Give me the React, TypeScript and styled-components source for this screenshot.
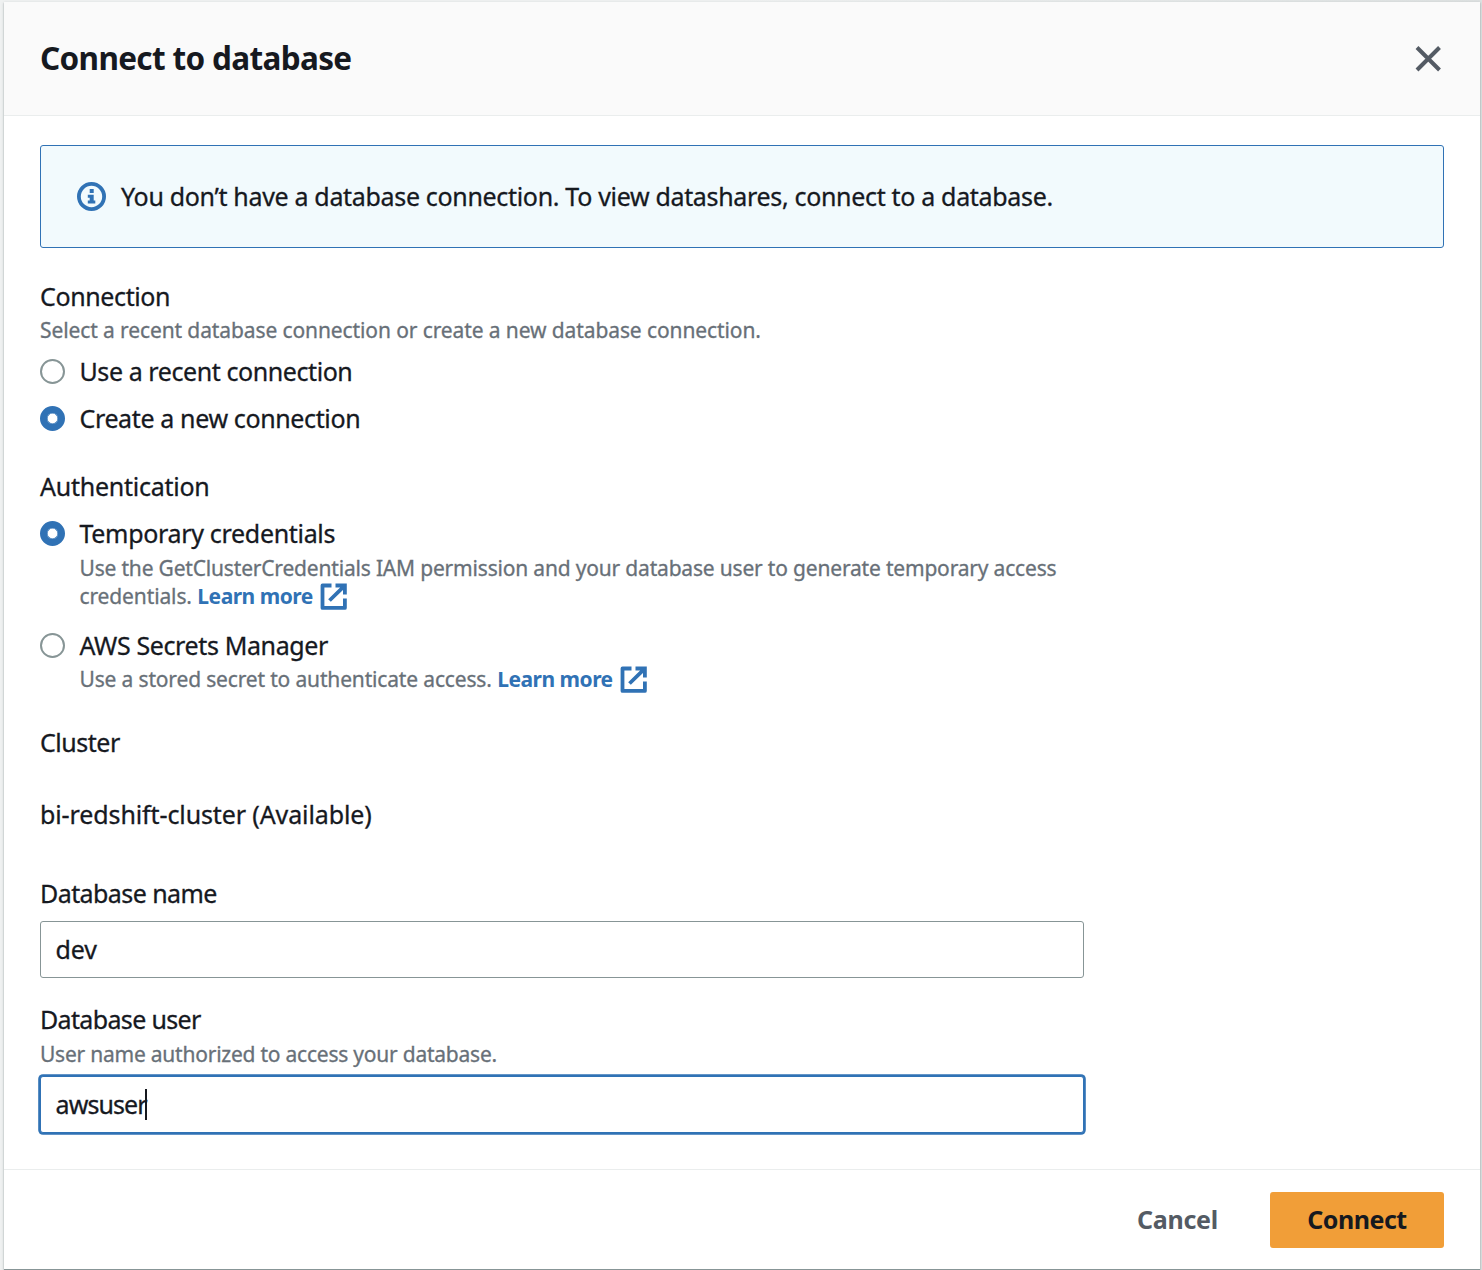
import React from "react";
import styled, { createGlobalStyle } from "styled-components";

const GlobalStyle = createGlobalStyle`
  *, *::before, *::after { box-sizing: border-box; }
  html, body { margin: 0; padding: 0; }
  body {
    background: #eff1f1;
    color: #16191f;
    font-family: "Noto Sans", "Open Sans", sans-serif;
    font-size: 25px;
    line-height: 32px;
    overflow: hidden;
    -webkit-text-stroke: 0.3px currentColor;
  }
`;

const Backdrop = styled.div`
  display: flex;
  height: 1270px;
  width: 1482px;
  padding: 2px 2px 0 4px;
  background: linear-gradient(90deg, #eff1f1 50%, #dde1e1 100%);
`;

const Dialog = styled.section`
  flex: 1;
  display: flex;
  flex-direction: column;
  background: #fff;
  border-bottom: 1px solid #879596;
  box-shadow: 0 1px 1px 0 rgba(0, 28, 36, 0.3), 0 1px 3px rgba(0, 28, 36, 0.2);
`;

const Header = styled.header`
  display: flex;
  align-items: center;
  justify-content: space-between;
  height: 114px;
  padding: 0 38px 0 36px;
  background: #fafafa;
  border-bottom: 1px solid #eaeded;
`;

const Text = styled.span<{ $track?: number }>`
  letter-spacing: ${(p) => p.$track ?? 0}px;
  white-space: nowrap;
`;

const Title = styled.h2<{ $track: number }>`
  margin: 0;
  padding-bottom: 1px;
  font-size: 31.5px;
  line-height: 40px;
  font-weight: 700;
  letter-spacing: ${(p) => p.$track}px;
  -webkit-text-stroke: 0;
`;

const CloseButton = styled.button`
  display: flex;
  padding: 0;
  border: 0;
  background: none;
  color: #545b64;
`;

const Body = styled.div`
  display: flex;
  flex-direction: column;
  height: 1053px;
  padding: 29px 36px 0;
`;

const Alert = styled.div`
  display: flex;
  align-items: flex-start;
  gap: 15px;
  height: 103px;
  padding: 34px 0 0 36px;
  border: 1px solid #3072b5;
  border-radius: 3px;
  background: #f2fafd;

  svg { margin-top: 2px; }
`;

const Field = styled.div<{ $gap: number }>`
  display: flex;
  flex-direction: column;
  margin-top: ${(p) => p.$gap}px;
`;

const Label = styled.div<{ $track?: number }>`
  letter-spacing: ${(p) => p.$track ?? 0}px;
  white-space: nowrap;
`;

const Hint = styled.div<{ $gap: number; $track?: number }>`
  margin-top: ${(p) => p.$gap}px;
  color: #687078;
  font-size: 21px;
  line-height: 28px;
  letter-spacing: ${(p) => p.$track ?? 0}px;
  white-space: nowrap;
`;

const Option = styled.label<{ $gap: number }>`
  display: flex;
  align-items: flex-start;
  gap: 14.5px;
  margin-top: ${(p) => p.$gap}px;
`;

const Radio = styled.span<{ $on?: boolean }>`
  flex: none;
  width: 25px;
  height: 25px;
  margin-top: 4px;
  border-radius: 50%;
  border: ${(p) => (p.$on ? "7px solid #3072b5" : "2px solid #879596")};
  box-shadow: ${(p) => (p.$on ? "inset 0 0 0 0.6px #3072b5" : "none")};
  background: #fff;
`;

const HintLine = styled.div`
  display: flex;
  align-items: center;
  height: 28px;
`;

const Link = styled.a<{ $left: number }>`
  display: flex;
  align-items: center;
  gap: 7px;
  margin-left: ${(p) => p.$left}px;
  color: #3072b5;
  font-weight: 700;
  -webkit-text-stroke: 0;
`;

const Input = styled.div<{ $gap: number; $focus?: boolean }>`
  display: flex;
  align-items: center;
  width: 1044px;
  height: 57px;
  margin-top: ${(p) => p.$gap}px;
  padding: 0 0 1px 14.5px;
  border: 1px solid ${(p) => (p.$focus ? "#3072b5" : "#879596")};
  border-radius: 3px;
  box-shadow: ${(p) => (p.$focus ? "0 0 0 1.8px #3072b5" : "none")};
  background: #fff;
`;

const Caret = styled.i`
  width: 2px;
  height: 31px;
  margin-left: -1.5px;
  background: #16191f;
`;

const Footer = styled.footer`
  display: flex;
  align-items: flex-start;
  justify-content: flex-end;
  flex: 1;
  padding: 22px 36px 0;
  border-top: 1px solid #eaeded;
`;

const Button = styled.button<{ $primary?: boolean }>`
  height: 56px;
  width: ${(p) => (p.$primary ? 174 : 185)}px;
  padding: 0 0 2px;
  border: 0;
  border-radius: 3px;
  background: ${(p) => (p.$primary ? "#f19e38" : "transparent")};
  color: ${(p) => (p.$primary ? "#16191f" : "#545b64")};
  font: 700 25px/32px "Noto Sans", "Open Sans", sans-serif;
  -webkit-text-stroke: 0;
`;

const CloseIcon = () => (
  <svg width="28" height="28" viewBox="0 0 28 28" fill="none" stroke="currentColor" strokeWidth="4">
    <path d="M3 2.500 25.500 25M25.500 2.500 3 25" />
  </svg>
);

const InfoIcon = () => (
  <svg width="29" height="29" viewBox="0 0 29 29" fill="none">
    <circle cx="14.5" cy="14.5" r="12.6" stroke="#3072b5" strokeWidth="3.8" />
    <path fill="#3072b5" d="M12.700 7h4v4h-4zM10.800 12.800h5.900v5.700h1.600v3.100h-7.500v-3.100h1.900v-2.700h-1.900z" />
  </svg>
);

const ExternalIcon = () => (
  <svg width="27" height="27" viewBox="0 0 27 27" fill="none" stroke="#3072b5" strokeWidth="3.8">
    <path d="M11.500 2.500H2.500v22.400h22.400V15.500" strokeLinejoin="round" />
    <path d="M15.500 2.500h9.400V11.500M24.500 2.900 9.500 17.500" />
  </svg>
);

export default function App() {
  return (
    <Backdrop>
      <GlobalStyle />
      <Dialog>
        <Header>
          <Title $track={-0.66}>Connect to database</Title>
          <CloseButton aria-label="Close">
            <CloseIcon />
          </CloseButton>
        </Header>
        <Body>
          <Alert>
            <InfoIcon />
            <Text $track={-0.325}>
              You don’t have a database connection. To view datashares, connect to a database.
            </Text>
          </Alert>

          <Field $gap={32}>
            <Label $track={-0.38}>Connection</Label>
            <Hint $gap={4} $track={-0.105}>
              Select a recent database connection or create a new database connection.
            </Hint>
            <Option $gap={11}>
              <Radio />
              <Text $track={-0.42}>Use a recent connection</Text>
            </Option>
            <Option $gap={15}>
              <Radio $on />
              <Text $track={-0.37}>Create a new connection</Text>
            </Option>
          </Field>

          <Field $gap={36}>
            <Label $track={-0.25}>Authentication</Label>
            <Option $gap={15}>
              <Radio $on />
              <div>
                <Label $track={-0.318}>Temporary credentials</Label>
                <Hint $gap={5} $track={-0.185}>
                  Use the GetClusterCredentials IAM permission and your database user to generate temporary access
                  <HintLine>
                    <Text $track={-0.12}>credentials.</Text>
                    <Link $left={5.5}>
                      <Text $track={-0.5}>Learn more</Text>
                      <ExternalIcon />
                    </Link>
                  </HintLine>
                </Hint>
              </div>
            </Option>
            <Option $gap={19}>
              <Radio />
              <div>
                <Label $track={-0.38}>AWS Secrets Manager</Label>
                <Hint $gap={4}>
                  <HintLine>
                    <Text $track={-0.16}>Use a stored secret to authenticate access.</Text>
                    <Link $left={5.5}>
                      <Text $track={-0.5}>Learn more</Text>
                      <ExternalIcon />
                    </Link>
                  </HintLine>
                </Hint>
              </div>
            </Option>
          </Field>

          <Field $gap={33}>
            <Label $track={-0.467}>Cluster</Label>
          </Field>
          <Field $gap={40}>
            <Label $track={-0.11}>bi-redshift-cluster (Available)</Label>
          </Field>

          <Field $gap={47}>
            <Label $track={-0.57}>Database name</Label>
            <Input $gap={12}>
              <Text $track={-0.1}>dev</Text>
            </Input>
          </Field>

          <Field $gap={25}>
            <Label $track={-0.65}>Database user</Label>
            <Hint $gap={5} $track={-0.228}>
              User name authorized to access your database.
            </Hint>
            <Input $gap={8} $focus>
              <Text $track={-0.9}>awsuser</Text>
              <Caret />
            </Input>
          </Field>
        </Body>
        <Footer>
          <Button>
            <Text $track={-0.3}>Cancel</Text>
          </Button>
          <Button $primary>
            <Text $track={-0.5}>Connect</Text>
          </Button>
        </Footer>
      </Dialog>
    </Backdrop>
  );
}
